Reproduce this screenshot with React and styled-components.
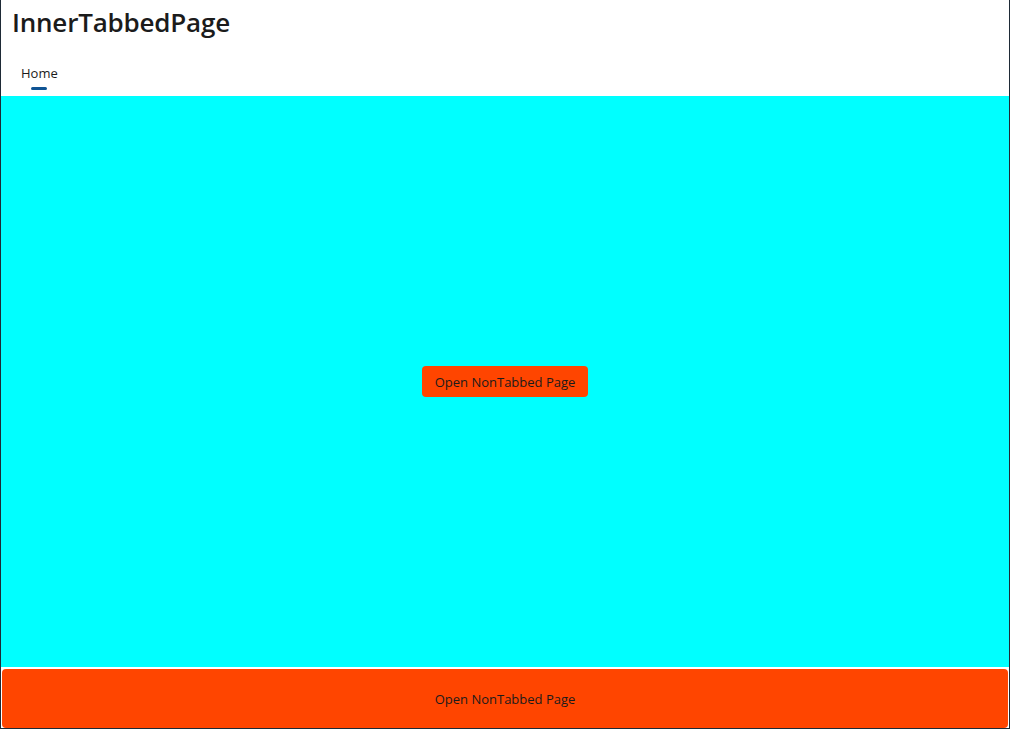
import React from "react";
import styled, { createGlobalStyle } from "styled-components";

const GlobalStyle = createGlobalStyle`
  html, body {
    margin: 0;
    padding: 0;
    background: #ffffff;
  }
  * {
    box-sizing: border-box;
  }
`;

export default function App() {
  return (
    <>
      <GlobalStyle />
      <Window>
        <Header>
          <Title>InnerTabbedPage</Title>
          <TabBar>
            <Tab $active>
              Home
              <Indicator />
            </Tab>
          </TabBar>
        </Header>
        <Content>
          <ActionButton>Open NonTabbed Page</ActionButton>
        </Content>
        <Footer>
          <ActionButton $wide>Open NonTabbed Page</ActionButton>
        </Footer>
      </Window>
    </>
  );
}

const Window = styled.div`
  width: 1010px;
  height: 729px;
  display: flex;
  flex-direction: column;
  border-left: 1px solid #1e2a36;
  border-right: 1px solid #1e2a36;
  border-bottom: 1px solid #1e2a36;
  font-family: "Open Sans", "Noto Sans", sans-serif;
  background: #ffffff;
  overflow: hidden;
`;

const Header = styled.div`
  display: flex;
  flex-direction: column;
  height: 96px;
  flex-shrink: 0;
  background: #ffffff;
`;

const Title = styled.h1`
  margin: 0;
  padding: 2px 0 0 11px;
  font-size: 26px;
  font-weight: 600;
  line-height: 40px;
  color: #1b1b1b;
  letter-spacing: -0.2px;
`;

const TabBar = styled.div`
  display: flex;
  padding: 23px 0 0 9px;
`;

const Tab = styled.div`
  position: relative;
  padding: 0 11px;
  font-size: 13px;
  line-height: 16px;
  color: #1b1b1b;
  height: 31px;
`;

const Indicator = styled.span`
  position: absolute;
  left: 50%;
  top: 22px;
  width: 16px;
  height: 3px;
  margin-left: -8px;
  border-radius: 2px;
  background: #0f5494;
`;

const Content = styled.div`
  flex: 1;
  background: #00ffff;
  display: flex;
  align-items: center;
  justify-content: center;
`;

const Footer = styled.div`
  display: flex;
  flex-shrink: 0;
  padding: 2px 0 0 1px;
  height: 61px;
  background: #ffffff;
`;

const ActionButton = styled.button`
  font-family: "Open Sans", "Noto Sans", sans-serif;
  font-size: 13px;
  color: #1b1b1b;
  background: #ff4500;
  border: none;
  border-radius: 4px;
  cursor: pointer;
  padding: 0 13px;
  height: ${(p) => (p.$wide ? "59px" : "31px")};
  width: ${(p) => (p.$wide ? "100%" : "auto")};
  margin-right: ${(p) => (p.$wide ? "1px" : "0")};
`;
